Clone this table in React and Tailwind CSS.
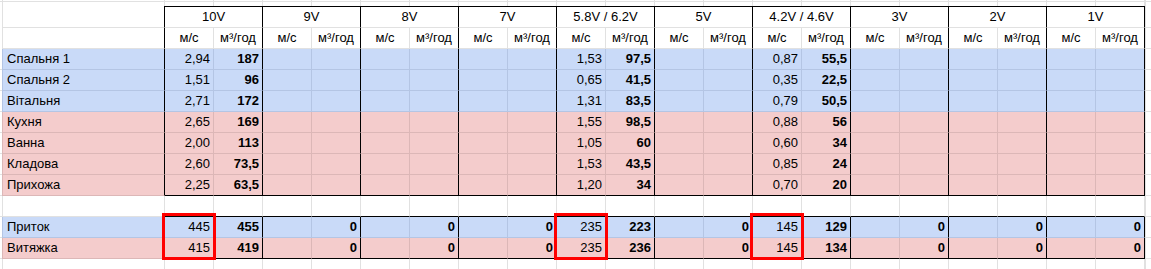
import React from "react";

const groups = ["10V", "9V", "8V", "7V", "5.8V / 6.2V", "5V", "4.2V / 4.6V", "3V", "2V", "1V"];

const dataRows = [
  { label: "Спальня 1", tone: "blue", v: { 0: ["2,94", "187"], 4: ["1,53", "97,5"], 6: ["0,87", "55,5"] } },
  { label: "Спальня 2", tone: "blue", v: { 0: ["1,51", "96"], 4: ["0,65", "41,5"], 6: ["0,35", "22,5"] } },
  { label: "Вітальня", tone: "blue", v: { 0: ["2,71", "172"], 4: ["1,31", "83,5"], 6: ["0,79", "50,5"] } },
  { label: "Кухня", tone: "pink", v: { 0: ["2,65", "169"], 4: ["1,55", "98,5"], 6: ["0,88", "56"] } },
  { label: "Ванна", tone: "pink", v: { 0: ["2,00", "113"], 4: ["1,05", "60"], 6: ["0,60", "34"] } },
  { label: "Кладова", tone: "pink", v: { 0: ["2,60", "73,5"], 4: ["1,53", "43,5"], 6: ["0,85", "24"] } },
  { label: "Прихожа", tone: "pink", v: { 0: ["2,25", "63,5"], 4: ["1,20", "34"], 6: ["0,70", "20"] } },
];

const sumRows = [
  { label: "Приток", tone: "blue", v: { 0: ["445", "455"], 4: ["235", "223"], 6: ["145", "129"] }, red: true },
  { label: "Витяжка", tone: "pink", v: { 0: ["415", "419"], 4: ["235", "236"], 6: ["145", "134"] } },
];

const tones = {
  blue: {
    bg: "bg-[#c9daf8]",
    lineR: "border-r-[#b4c5e4]",
    lineB: "border-b-[#b4c5e4]",
    lineL: "border-l-[#b4c5e4]",
  },
  pink: {
    bg: "bg-[#f4cccc]",
    lineR: "border-r-[#dcb7b7]",
    lineB: "border-b-[#dcb7b7]",
    lineL: "border-l-[#dcb7b7]",
  },
};

const G = "#e1e1e1";

function Spacer({ h, bottom }) {
  return (
    <div
      className={
        "w-[2px] shrink-0 box-border " + (bottom ? "border-b border-b-[#e1e1e1]" : "")
      }
      style={{ height: h }}
    />
  );
}

function Extra({ bottom }) {
  return (
    <div
      className={
        "w-[6px] shrink-0 box-border border-l border-l-[#e1e1e1] " +
        (bottom ? "border-b border-b-[#e1e1e1]" : "")
      }
    />
  );
}

function TopRows() {
  const subs = Array.from({ length: 20 });
  return (
    <>
      <div className="flex h-[2px]">
        <Spacer bottom />
        <div className="w-[163px] shrink-0 box-border border-l border-r border-b border-l-[#e1e1e1] border-r-[#e1e1e1] border-b-[#e1e1e1]" />
        {subs.map((_, i) => (
          <div key={i} className="w-[49px] shrink-0 box-border border-r border-b border-r-[#e1e1e1] border-b-[#e1e1e1]" />
        ))}
        <Extra bottom />
      </div>
      <div className="flex h-[4px]">
        <Spacer />
        <div className="w-[163px] shrink-0 box-border border-l border-r border-l-[#e1e1e1] border-r-[#e1e1e1]" />
        {subs.map((_, i) => (
          <div key={i} className="w-[49px] shrink-0 box-border border-r border-r-[#e1e1e1]" />
        ))}
        <Extra />
      </div>
    </>
  );
}

function HeaderRows() {
  return (
    <>
      <div className="flex h-[22px]">
        <Spacer />
        <div className="w-[163px] shrink-0 box-border border-l border-r border-b border-l-[#e1e1e1] border-r-black border-b-[#e1e1e1]" />
        {groups.map((g) => (
          <div
            key={g}
            className="w-[98px] shrink-0 box-border border-t border-r border-b border-t-black border-r-black border-b-[#e1e1e1] flex items-end justify-center pb-[3px] whitespace-nowrap"
          >
            {g}
          </div>
        ))}
        <Extra bottom />
      </div>
      <div className="flex h-[21px]">
        <Spacer />
        <div className="w-[163px] shrink-0 box-border border-l border-r border-b border-l-[#e1e1e1] border-r-black border-b-[#e1e1e1]" />
        {groups.map((g) => (
          <React.Fragment key={g}>
            <div className="w-[49px] shrink-0 box-border border-r border-b border-r-[#e1e1e1] border-b-[#e1e1e1] flex items-end justify-center pb-[3px]">
              м/с
            </div>
            <div className="w-[49px] shrink-0 box-border border-r border-b border-r-black border-b-[#e1e1e1] flex items-end justify-center pb-[3px] whitespace-nowrap">
              м³/год
            </div>
          </React.Fragment>
        ))}
        <Extra bottom />
      </div>
    </>
  );
}

function DataRow({ row, last, summary }) {
  const t = tones[row.tone];
  const bottomSub = last ? "border-b-black" : t.lineB;
  return (
    <div className="flex h-[21px]">
      <Spacer bottom />
      <div
        className={
          "w-[163px] shrink-0 box-border border-l border-r border-b border-r-black flex items-end pl-[4px] pb-[3px] whitespace-nowrap " +
          t.bg + " " + t.lineL + " " + t.lineB
        }
      >
        {row.label}
      </div>
      {groups.map((g, gi) => {
        const vals = row.v[gi];
        const ms = vals ? vals[0] : "";
        const m3 = vals ? vals[1] : summary ? "0" : "";
        return (
          <React.Fragment key={g}>
            <div
              className={
                "relative w-[49px] shrink-0 box-border border-r border-b flex items-end justify-end pr-[3px] pb-[3px] " +
                t.bg + " " + t.lineR + " " + bottomSub
              }
            >
              {ms}
              {row.red && vals ? (
                <div className="absolute left-[-3px] top-[-4px] w-[54px] h-[47px] box-border border-[3px] border-[#ff0000] z-10 pointer-events-none" />
              ) : null}
            </div>
            <div
              className={
                "w-[49px] shrink-0 box-border border-r border-b border-r-black flex items-end justify-end pr-[3px] pb-[3px] font-bold " +
                t.bg + " " + bottomSub
              }
            >
              {m3}
            </div>
          </React.Fragment>
        );
      })}
      <Extra bottom />
    </div>
  );
}

function EmptyRow() {
  return (
    <div className="flex h-[21px]">
      <Spacer bottom />
      <div className="w-[163px] shrink-0 box-border border-l border-r border-b border-l-[#e1e1e1] border-r-[#e1e1e1] border-b-[#e1e1e1]" />
      {Array.from({ length: 20 }).map((_, i) => (
        <div key={i} className="w-[49px] shrink-0 box-border border-r border-b border-r-[#e1e1e1] border-b-black" />
      ))}
      <Extra bottom />
    </div>
  );
}

function TrailingRow() {
  return (
    <div className="flex h-[10px]">
      <Spacer />
      <div className="w-[163px] shrink-0 box-border border-l border-r border-l-[#e1e1e1] border-r-[#e1e1e1]" />
      {Array.from({ length: 20 }).map((_, i) => (
        <div key={i} className="w-[49px] shrink-0 box-border border-r border-r-[#e1e1e1]" />
      ))}
      <Extra />
    </div>
  );
}

export default function App() {
  return (
    <div className="w-[1151px] h-[269px] overflow-hidden bg-white text-black font-['Liberation_Sans',Arial,sans-serif] text-[13px] leading-[15px]">
      <TopRows />
      <HeaderRows />
      {dataRows.map((r, i) => (
        <DataRow key={r.label} row={r} last={i === dataRows.length - 1} />
      ))}
      <EmptyRow />
      {sumRows.map((r, i) => (
        <DataRow key={r.label} row={r} last={i === sumRows.length - 1} summary />
      ))}
      <TrailingRow />
    </div>
  );
}
